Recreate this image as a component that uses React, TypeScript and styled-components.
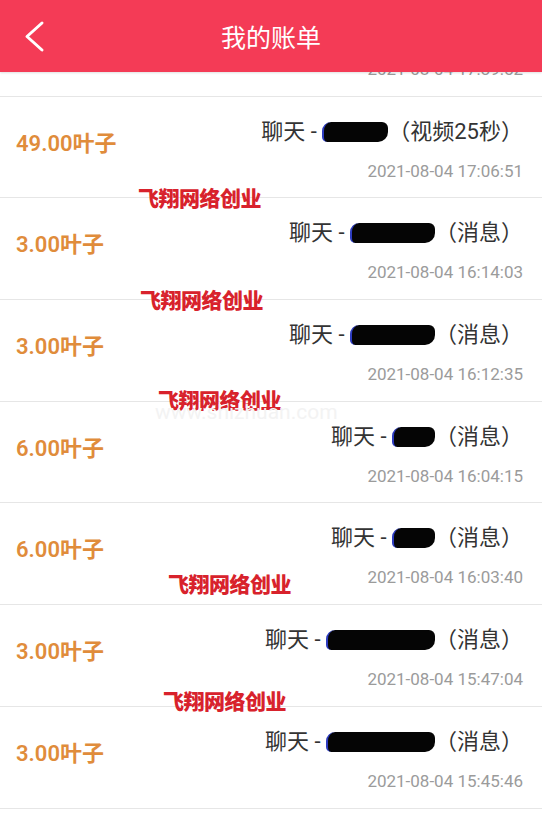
import { useLayoutEffect, useRef } from 'react';
import styled, { createGlobalStyle } from 'styled-components';

type Bill = {
  amount: string;
  kind: string;
  blob: number;
  time: string;
};

const bills: Bill[] = [
  { amount: '6.00叶子', kind: '消息', blob: 60, time: '2021-08-04 17:39:52' },
  { amount: '49.00叶子', kind: '视频25秒', blob: 64, time: '2021-08-04 17:06:51' },
  { amount: '3.00叶子', kind: '消息', blob: 83, time: '2021-08-04 16:14:03' },
  { amount: '3.00叶子', kind: '消息', blob: 83, time: '2021-08-04 16:12:35' },
  { amount: '6.00叶子', kind: '消息', blob: 41, time: '2021-08-04 16:04:15' },
  { amount: '6.00叶子', kind: '消息', blob: 41, time: '2021-08-04 16:03:40' },
  { amount: '3.00叶子', kind: '消息', blob: 107, time: '2021-08-04 15:47:04' },
  { amount: '3.00叶子', kind: '消息', blob: 107, time: '2021-08-04 15:45:46' },
  { amount: '3.00叶子', kind: '消息', blob: 80, time: '2021-08-04 15:40:12' },
];

// watermark stamps laid over the screenshot
const marks = [
  { x: 138, y: 186 },
  { x: 140, y: 288 },
  { x: 158, y: 388 },
  { x: 168, y: 572 },
  { x: 163, y: 689 },
];

export default function App() {
  const listRef = useRef<HTMLDivElement>(null);

  useLayoutEffect(() => {
    if (listRef.current) listRef.current.scrollTop = 77;
  }, []);

  return (
    <Page>
      <GlobalStyle />
      <Header>
        <BackButton aria-label='返回'>
          <svg width='22' height='34' viewBox='0 0 22 34'>
            <polyline
              points='19,4 4,17.5 19,31'
              fill='none'
              stroke='#fff'
              strokeWidth='3'
              strokeLinecap='round'
              strokeLinejoin='round'
            />
          </svg>
        </BackButton>
        <Title>我的账单</Title>
        <span />
      </Header>
      <List ref={listRef}>
        {bills.map((bill) => (
          <Row key={bill.time}>
            <Amount>{bill.amount}</Amount>
            <Detail>
              <Subject>
                聊天 - <Redact $w={bill.blob} />（{bill.kind}）
              </Subject>
              <Time>{bill.time}</Time>
            </Detail>
          </Row>
        ))}
      </List>
      <Overlay>
        {marks.map((m) => (
          <Stamp key={m.y} $x={m.x} $y={m.y}>
            飞翔网络创业
          </Stamp>
        ))}
        <SiteMark>www.shizhuan.com</SiteMark>
      </Overlay>
    </Page>
  );
}

const GlobalStyle = createGlobalStyle`
  html, body {
    margin: 0;
    padding: 0;
    background: #fff;
  }
  body {
    font-family: Roboto, 'Noto Sans CJK SC', sans-serif;
  }
`;

const Page = styled.div`
  position: relative;
  display: flex;
  flex-direction: column;
  width: 542px;
  height: 831px;
  overflow: hidden;
  background: #fff;
`;

const Header = styled.header`
  position: relative;
  z-index: 2;
  flex: 0 0 72px;
  display: grid;
  grid-template-columns: 70px 1fr 70px;
  align-items: center;
  background: #f43b56;
  box-shadow: 0 1px 2px rgba(0, 0, 0, 0.12);
`;

const BackButton = styled.button`
  all: unset;
  height: 72px;
  display: flex;
  align-items: center;
  padding-left: 23px;
`;

const Title = styled.h1`
  margin: 0;
  text-align: center;
  color: #fff;
  font-size: 25px;
  font-weight: 400;
  font-family: 'Noto Sans CJK SC', sans-serif;
  line-height: 70px;
`;

const List = styled.div`
  flex: 1;
  overflow-y: auto;
  scrollbar-width: none;

  &::-webkit-scrollbar {
    display: none;
  }
`;

const Row = styled.div`
  display: flex;
  justify-content: space-between;
  align-items: flex-start;
  height: 101.7px;
  box-sizing: border-box;
  padding: 21px 19px 0 16px;
  border-bottom: 1px solid #e6e6e6;
`;

const Amount = styled.div`
  margin-top: 11px;
  color: #e08c3b;
  font-size: 22px;
  font-weight: 600;
  line-height: 30px;
`;

const Detail = styled.div`
  display: flex;
  flex-direction: column;
  align-items: flex-end;
`;

const Subject = styled.div`
  display: flex;
  align-items: center;
  color: #333;
  font-size: 22px;
  line-height: 28px;
  white-space: pre;
`;

const Redact = styled.span<{ $w: number }>`
  display: inline-block;
  width: ${(p) => p.$w}px;
  height: 20px;
  background: #050505;
  border-radius: 9px 6px 10px 5px;
  border-left: 2px solid #2d3cc0;
`;

const Time = styled.div`
  margin-top: 13px;
  color: #9b9b9b;
  font-size: 17px;
  line-height: 24px;
`;

const Overlay = styled.div`
  position: absolute;
  inset: 0;
  pointer-events: none;
  z-index: 3;
`;

const Stamp = styled.span<{ $x: number; $y: number }>`
  position: absolute;
  left: ${(p) => p.$x}px;
  top: ${(p) => p.$y}px;
  color: #d8222c;
  font-family: 'Noto Sans CJK SC', sans-serif;
  font-size: 21px;
  font-weight: 900;
  line-height: 22px;
  letter-spacing: -0.5px;
`;

const SiteMark = styled.span`
  position: absolute;
  left: 155px;
  top: 400px;
  color: #f3f3f3;
  font-size: 21px;
  line-height: 24px;
`;
